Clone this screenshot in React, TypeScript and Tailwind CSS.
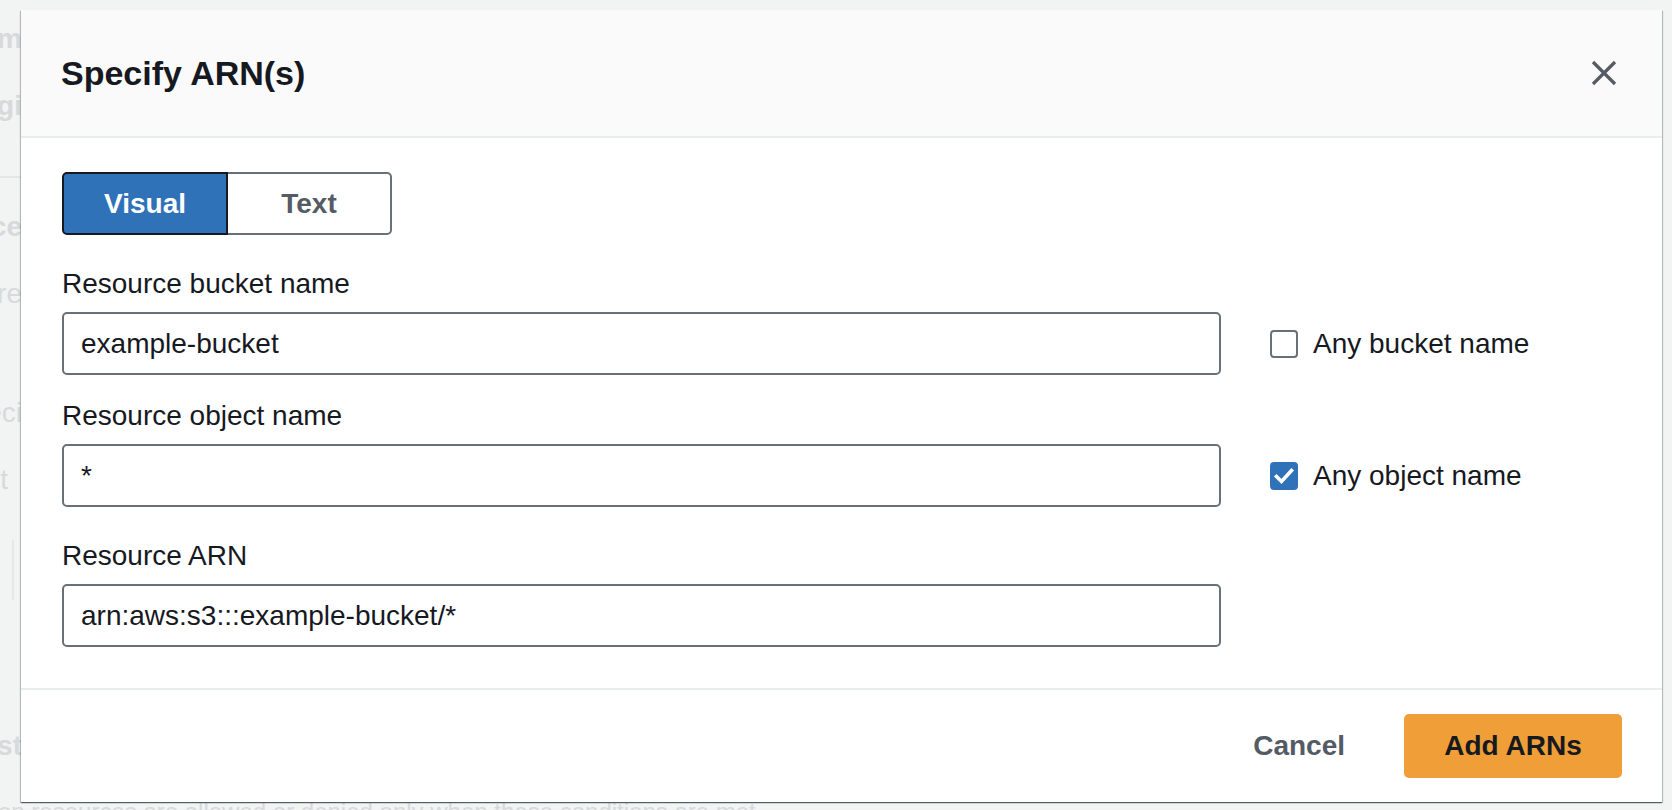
import React from "react";

const font = { fontFamily: '"Liberation Sans", Arial, sans-serif' };

function Ghost({ text, bold, h, pr }: { text: string; bold?: boolean; h: string; pr?: string }) {
  return (
    <div className={`flex w-[22px] items-center justify-end whitespace-nowrap overflow-visible ${h} ${pr ?? ""}`}>
      <span className={`text-[28px] leading-[40px] text-[#d6dadb] ${bold ? "font-bold" : ""}`}>{text}</span>
    </div>
  );
}

function Checkbox({ checked, label }: { checked?: boolean; label: string }) {
  return (
    <div className="ml-[49px] flex items-center gap-[15px]">
      {checked ? (
        <div className="flex h-[28px] w-[28px] items-center justify-center rounded-[4px] bg-[#3072b7]">
          <svg width="28" height="28" viewBox="0 0 28 28">
            <path d="M6.5 14.5 L11.5 19.5 L21.5 8.5" fill="none" stroke="#ffffff" strokeWidth="3.6" strokeLinecap="square" />
          </svg>
        </div>
      ) : (
        <div className="h-[28px] w-[28px] rounded-[4px] border-2 border-[#687078] bg-white" />
      )}
      <span className="text-[28px] leading-[40px] text-[#16191f]">{label}</span>
    </div>
  );
}

function Field({ label, value, mt, checkbox }: { label: string; value: string; mt: string; checkbox?: React.ReactNode }) {
  return (
    <div className={mt}>
      <div className="mb-[8px] text-[28px] leading-[40px] text-[#16191f]">{label}</div>
      <div className="flex items-center">
        <div className="flex h-[63px] w-[1159px] items-center rounded-[5px] border-2 border-[#687078] bg-white px-[17px] text-[28px] text-[#16191f]">
          {value}
        </div>
        {checkbox}
      </div>
    </div>
  );
}

export default function App() {
  return (
    <div style={font} className="relative h-[810px] w-full overflow-hidden bg-[#f2f3f3]">
      {/* ghost background page */}
      <div className="flex flex-col">
        <div className="h-[19px]" />
        <Ghost text="Custom" bold h="h-[40px]" />
        <div className="h-[27px]" />
        <Ghost text="Regi" bold h="h-[40px]" />
        <div className="h-[50px]" />
        <div className="h-[2px] w-[22px] bg-[#e3e6e6]" />
        <div className="h-[29px]" />
        <Ghost text="Resource" bold h="h-[40px]" />
        <div className="h-[27px]" />
        <Ghost text="are" h="h-[40px]" />
        <div className="h-[79px]" />
        <Ghost text="Speci" h="h-[40px]" />
        <div className="h-[27px]" />
        <Ghost text="t" h="h-[40px]" pr="pr-[14px]" />
        <div className="h-[40px]" />
        <div className="ml-[12px] h-[60px] w-[10px] border-l-2 border-[#e6e8e8]" />
        <div className="h-[126px]" />
        <Ghost text="List" bold h="h-[40px]" />
        <div className="h-[26px]" />
        <div className="-ml-[2px] whitespace-nowrap text-[24px] leading-[40px] text-[#d6dadb]">
          on resources are allowed or denied only when these conditions are met
        </div>
      </div>

      {/* modal */}
      <div className="absolute left-[21px] top-[10px] w-[1641px] bg-white shadow-[0_1px_1px_0_rgba(0,28,36,0.5),1px_1px_1px_0_rgba(0,28,36,0.2),-1px_1px_1px_0_rgba(0,28,36,0.2)]">
        <div className="flex h-[128px] items-center justify-between border-b-2 border-[#eaeded] bg-[#fafafa] pl-[40px] pr-[45px]">
          <div className="mb-[1px] text-[34px] font-bold leading-[40px] text-[#16191f]">Specify ARN(s)</div>
          <svg width="26" height="26" viewBox="0 0 26 26">
            <path d="M2 2 L24 24 M24 2 L2 24" stroke="#545b64" strokeWidth="3.2" fill="none" />
          </svg>
        </div>

        <div className="border-b-2 border-[#eaeded] pb-[41px] pl-[41px] pt-[34px]">
          <div className="flex h-[63px] w-[330px] text-[28px] font-bold">
            <div className="flex w-[166px] items-center justify-center rounded-l-[5px] border-2 border-[#16191f] bg-[#3072b7] text-white">
              Visual
            </div>
            <div className="flex w-[164px] items-center justify-center rounded-r-[5px] border-2 border-l-0 border-[#687078] bg-white text-[#545b64]">
              Text
            </div>
          </div>

          <Field label="Resource bucket name" value="example-bucket" mt="mt-[29px]" checkbox={<Checkbox label="Any bucket name" />} />
          <Field label="Resource object name" value="*" mt="mt-[21px]" checkbox={<Checkbox checked label="Any object name" />} />
          <Field label="Resource ARN" value="arn:aws:s3:::example-bucket/*" mt="mt-[29px]" />
        </div>

        <div className="flex h-[112px] items-center justify-end pr-[40px]">
          <span className="text-[28px] font-bold text-[#545b64]">Cancel</span>
          <div className="ml-[59px] flex h-[64px] w-[218px] items-center justify-center rounded-[5px] bg-[#ef9e38] text-[28px] font-bold text-[#16191f]">
            Add ARNs
          </div>
        </div>
      </div>
    </div>
  );
}
